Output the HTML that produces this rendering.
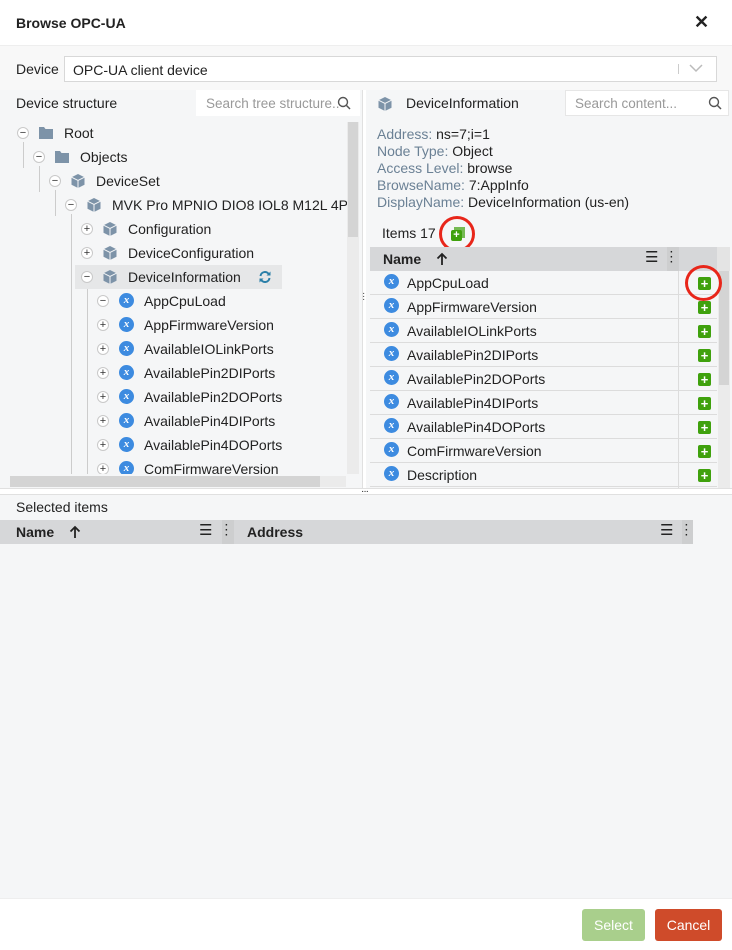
<!DOCTYPE html>
<html><head><meta charset="utf-8">
<style>
*{box-sizing:border-box;margin:0;padding:0}
body{width:732px;height:950px;position:relative;overflow:hidden;background:#f5f6f7;font-family:"Liberation Sans",sans-serif;font-size:14px;color:#222}
.a{position:absolute}
.t{position:absolute;white-space:nowrap;line-height:16px}
.tg{position:absolute;width:12px;height:12px;border:1px solid #c9c9c9;border-radius:50%;background:#fff;font-size:11px;line-height:10px;text-align:center;color:#333}
.xi{position:absolute;width:15px;height:15px;border-radius:50%;background:#3d8be0;color:#fff;font:italic bold 11px "Liberation Serif",serif;text-align:center;line-height:14px}
.gp{position:absolute;width:13px;height:13px;background:#3fa10d;border-radius:2px;color:#fff;font:bold 13px/13px "Liberation Sans",sans-serif;text-align:center}
.row{position:absolute;left:370px;width:347px;height:24px;border-bottom:1px solid #dcdcdc}
.ring{position:absolute;border:3px solid #e8261a;border-radius:50%}
</style></head><body>
<svg width="0" height="0" style="position:absolute"><defs>
<symbol id="cube" viewBox="0 0 16 16"><path d="M8 1l6.5 3.2v7.6L8 15 1.5 11.8V4.2z" fill="#7d93a8"/><path d="M1.5 4.2L8 7.4l6.5-3.2M8 7.4V15" fill="none" stroke="#f5f6f7" stroke-width="1"/></symbol>
<symbol id="fold" viewBox="0 0 16 16"><path d="M1 2h5l1.5 2H15v10H1z" fill="#7d93a8"/></symbol>
<symbol id="up" viewBox="0 0 12 14"><path d="M6 13V2M1.5 6.5L6 2l4.5 4.5" fill="none" stroke="#222" stroke-width="1.8"/></symbol>
</defs></svg>
<!-- header -->
<div class="a" style="left:0;top:0;width:732px;height:46px;background:#fff;border-bottom:1px solid #eee"></div>
<div class="t" style="left:16px;top:15px;font-weight:bold;font-size:14px">Browse OPC-UA</div>
<div class="t" style="left:694px;top:14px;font-size:18px;font-weight:bold">✕</div>
<!-- device row -->
<div class="a" style="left:0;top:46px;width:732px;height:44px;background:#f8f8f8"></div>
<div class="t" style="left:16px;top:61px">Device</div>
<div class="a" style="left:64px;top:56px;width:653px;height:26px;background:#fff;border:1px solid #d8d8d8"></div>
<div class="t" style="left:73px;top:62px">OPC-UA client device</div>
<div class="a" style="left:678px;top:64px;width:1px;height:10px;background:#ccc"></div>
<svg class="a" style="left:689px;top:64px" width="14" height="9"><path d="M1 1l6 6 6-6" fill="none" stroke="#bbb" stroke-width="1.5"/></svg>
<!-- left panel -->
<div class="t" style="left:16px;top:95px">Device structure</div>
<div class="a" style="left:196px;top:90px;width:164px;height:26px;background:#fff"></div>
<div class="t" style="left:206px;top:96px;color:#999;font-size:13.5px">Search tree structure..</div>
<svg class="a" style="left:337px;top:96px" width="14" height="14"><circle cx="6" cy="6" r="4.5" fill="none" stroke="#555" stroke-width="1.4"/><path d="M9.5 9.5l3.5 3.5" stroke="#555" stroke-width="1.5"/></svg>
<div class="a" style="left:23px;top:142px;width:1px;height:26px;background:#ccc"></div>
<div class="a" style="left:39px;top:166px;width:1px;height:26px;background:#ccc"></div>
<div class="a" style="left:55px;top:190px;width:1px;height:26px;background:#ccc"></div>
<div class="a" style="left:71px;top:214px;width:1px;height:260px;background:#ccc"></div>
<div class="a" style="left:87px;top:286px;width:1px;height:190px;background:#ccc"></div>
<div class="a" style="left:75px;top:265px;width:207px;height:24px;background:#e6e7e8"></div>
<div class="tg" style="left:17px;top:127px">−</div><svg class="a" style="left:38px;top:125px" width="16" height="16"><use href="#fold"/></svg><div class="t" style="left:64px;top:125px">Root</div>
<div class="tg" style="left:33px;top:151px">−</div><svg class="a" style="left:54px;top:149px" width="16" height="16"><use href="#fold"/></svg><div class="t" style="left:80px;top:149px">Objects</div>
<div class="tg" style="left:49px;top:175px">−</div><svg class="a" style="left:70px;top:173px" width="16" height="16"><use href="#cube"/></svg><div class="t" style="left:96px;top:173px">DeviceSet</div>
<div class="tg" style="left:65px;top:199px">−</div><svg class="a" style="left:86px;top:197px" width="16" height="16"><use href="#cube"/></svg><div class="t" style="left:112px;top:197px">MVK Pro MPNIO DIO8 IOL8 M12L 4P</div>
<div class="tg" style="left:81px;top:223px">+</div><svg class="a" style="left:102px;top:221px" width="16" height="16"><use href="#cube"/></svg><div class="t" style="left:128px;top:221px">Configuration</div>
<div class="tg" style="left:81px;top:247px">+</div><svg class="a" style="left:102px;top:245px" width="16" height="16"><use href="#cube"/></svg><div class="t" style="left:128px;top:245px">DeviceConfiguration</div>
<div class="tg" style="left:81px;top:271px">−</div><svg class="a" style="left:102px;top:269px" width="16" height="16"><use href="#cube"/></svg><div class="t" style="left:128px;top:269px">DeviceInformation</div>
<svg class="a" style="left:258px;top:270px" width="14" height="14"><path d="M2.5 6A4.5 4.5 0 0 1 11 4.5M11.5 8A4.5 4.5 0 0 1 3 9.5" fill="none" stroke="#2a7fa8" stroke-width="2"/><path d="M12.5 1.5v4h-4zM1.5 12.5v-4h4z" fill="#2a7fa8"/></svg>
<div class="tg" style="left:97px;top:295px">−</div><div class="xi" style="left:119px;top:293px">x</div><div class="t" style="left:144px;top:293px">AppCpuLoad</div>
<div class="tg" style="left:97px;top:319px">+</div><div class="xi" style="left:119px;top:317px">x</div><div class="t" style="left:144px;top:317px">AppFirmwareVersion</div>
<div class="tg" style="left:97px;top:343px">+</div><div class="xi" style="left:119px;top:341px">x</div><div class="t" style="left:144px;top:341px">AvailableIOLinkPorts</div>
<div class="tg" style="left:97px;top:367px">+</div><div class="xi" style="left:119px;top:365px">x</div><div class="t" style="left:144px;top:365px">AvailablePin2DIPorts</div>
<div class="tg" style="left:97px;top:391px">+</div><div class="xi" style="left:119px;top:389px">x</div><div class="t" style="left:144px;top:389px">AvailablePin2DOPorts</div>
<div class="tg" style="left:97px;top:415px">+</div><div class="xi" style="left:119px;top:413px">x</div><div class="t" style="left:144px;top:413px">AvailablePin4DIPorts</div>
<div class="tg" style="left:97px;top:439px">+</div><div class="xi" style="left:119px;top:437px">x</div><div class="t" style="left:144px;top:437px">AvailablePin4DOPorts</div>
<div class="tg" style="left:97px;top:463px">+</div><div class="xi" style="left:119px;top:461px">x</div><div class="t" style="left:144px;top:461px">ComFirmwareVersion</div>
<div class="a" style="left:347px;top:122px;width:12px;height:352px;background:#ebebeb"></div>
<div class="a" style="left:348px;top:122px;width:10px;height:115px;background:#d4d4d4"></div>
<div class="a" style="left:0;top:474px;width:346px;height:14px;background:#f5f6f7"></div>
<div class="a" style="left:10px;top:476px;width:310px;height:11px;background:#d4d4d4"></div>
<div class="a" style="left:320px;top:476px;width:26px;height:11px;background:#ebebeb"></div>
<!-- vertical splitter -->
<div class="a" style="left:362px;top:90px;width:4px;height:398px;background:#fff;border-left:1px solid #e0e0e0"></div>
<div class="t" style="left:362px;top:292px;font-size:10px;line-height:3px;color:#444">·<br>·<br>·</div>
<!-- right panel -->
<svg class="a" style="left:377px;top:96px" width="16" height="16"><use href="#cube"/></svg>
<div class="t" style="left:406px;top:95px">DeviceInformation</div>
<div class="a" style="left:565px;top:90px;width:164px;height:26px;background:#fff;border:1px solid #e6e6e6"></div>
<div class="t" style="left:575px;top:96px;color:#999;font-size:13.5px">Search content...</div>
<svg class="a" style="left:708px;top:96px" width="14" height="14"><circle cx="6" cy="6" r="4.5" fill="none" stroke="#555" stroke-width="1.4"/><path d="M9.5 9.5l3.5 3.5" stroke="#555" stroke-width="1.5"/></svg>
<div class="t" style="left:377px;top:126px;color:#6b8195">Address: <span style="color:#222">ns=7;i=1</span></div>
<div class="t" style="left:377px;top:143px;color:#6b8195">Node Type: <span style="color:#222">Object</span></div>
<div class="t" style="left:377px;top:160px;color:#6b8195">Access Level: <span style="color:#222">browse</span></div>
<div class="t" style="left:377px;top:177px;color:#6b8195">BrowseName: <span style="color:#222">7:AppInfo</span></div>
<div class="t" style="left:377px;top:194px;color:#6b8195">DisplayName: <span style="color:#222">DeviceInformation (us-en)</span></div>
<div class="t" style="left:382px;top:225px">Items 17</div>
<div class="a" style="left:454px;top:227px;width:11px;height:11px;background:#3fa10d;opacity:.7"></div>
<div class="gp" style="left:451px;top:230px;width:11px;height:11px;font-size:11px;line-height:11px">+</div>
<div class="ring" style="left:439px;top:216px;width:36px;height:36px"></div>
<div class="a" style="left:370px;top:247px;width:347px;height:24px;background:#d6d7d9"></div>
<div class="a" style="left:717px;top:247px;width:13px;height:24px;background:#e4e4e4"></div>
<div class="t" style="left:383px;top:251px;font-weight:bold">Name</div>
<svg class="a" style="left:436px;top:252px" width="12" height="14"><use href="#up"/></svg>
<div class="t" style="left:645px;top:250px;font-size:15px">☰</div>
<div class="a" style="left:667px;top:247px;width:12px;height:24px;background:#cdcecf"></div>
<div class="t" style="left:670px;top:250px;font-weight:bold;font-size:10px;line-height:5px">·<br>·<br>·</div>
<div class="a" style="left:678px;top:271px;width:1px;height:217px;background:#dcdcdc"></div>
<div class="a" style="left:718px;top:271px;width:12px;height:217px;background:#ebebeb"></div>
<div class="a" style="left:719px;top:271px;width:10px;height:114px;background:#d4d4d4"></div>
<div class="row" style="top:271px"></div><div class="xi" style="left:384px;top:274px">x</div><div class="t" style="left:407px;top:275px">AppCpuLoad</div><div class="gp" style="left:698px;top:277px">+</div>
<div class="row" style="top:295px"></div><div class="xi" style="left:384px;top:298px">x</div><div class="t" style="left:407px;top:299px">AppFirmwareVersion</div><div class="gp" style="left:698px;top:301px">+</div>
<div class="row" style="top:319px"></div><div class="xi" style="left:384px;top:322px">x</div><div class="t" style="left:407px;top:323px">AvailableIOLinkPorts</div><div class="gp" style="left:698px;top:325px">+</div>
<div class="row" style="top:343px"></div><div class="xi" style="left:384px;top:346px">x</div><div class="t" style="left:407px;top:347px">AvailablePin2DIPorts</div><div class="gp" style="left:698px;top:349px">+</div>
<div class="row" style="top:367px"></div><div class="xi" style="left:384px;top:370px">x</div><div class="t" style="left:407px;top:371px">AvailablePin2DOPorts</div><div class="gp" style="left:698px;top:373px">+</div>
<div class="row" style="top:391px"></div><div class="xi" style="left:384px;top:394px">x</div><div class="t" style="left:407px;top:395px">AvailablePin4DIPorts</div><div class="gp" style="left:698px;top:397px">+</div>
<div class="row" style="top:415px"></div><div class="xi" style="left:384px;top:418px">x</div><div class="t" style="left:407px;top:419px">AvailablePin4DOPorts</div><div class="gp" style="left:698px;top:421px">+</div>
<div class="row" style="top:439px"></div><div class="xi" style="left:384px;top:442px">x</div><div class="t" style="left:407px;top:443px">ComFirmwareVersion</div><div class="gp" style="left:698px;top:445px">+</div>
<div class="row" style="top:463px"></div><div class="xi" style="left:384px;top:466px">x</div><div class="t" style="left:407px;top:467px">Description</div><div class="gp" style="left:698px;top:469px">+</div>
<div class="ring" style="left:685px;top:265px;width:37px;height:36px"></div>
<!-- horizontal splitter -->
<div class="a" style="left:0;top:488px;width:732px;height:7px;background:#fff;border-top:1px solid #e0e0e0;border-bottom:1px solid #e0e0e0"></div>
<div class="t" style="left:361px;top:484px;font-size:10px;letter-spacing:-1px">···</div>
<!-- selected items -->
<div class="t" style="left:16px;top:499px">Selected items</div>
<div class="a" style="left:0;top:520px;width:693px;height:24px;background:#d6d7d9"></div>
<div class="t" style="left:16px;top:524px;font-weight:bold">Name</div>
<svg class="a" style="left:69px;top:525px" width="12" height="14"><use href="#up"/></svg>
<div class="t" style="left:199px;top:523px;font-size:15px">☰</div>
<div class="a" style="left:222px;top:520px;width:12px;height:24px;background:#cdcecf"></div>
<div class="t" style="left:225px;top:523px;font-weight:bold;font-size:10px;line-height:5px">·<br>·<br>·</div>
<div class="t" style="left:247px;top:524px;font-weight:bold">Address</div>
<div class="t" style="left:660px;top:523px;font-size:15px">☰</div>
<div class="a" style="left:682px;top:520px;width:11px;height:24px;background:#cdcecf"></div>
<div class="t" style="left:685px;top:523px;font-weight:bold;font-size:10px;line-height:5px">·<br>·<br>·</div>
<!-- footer -->
<div class="a" style="left:0;top:898px;width:732px;height:52px;background:#fff;border-top:1px solid #eee"></div>
<div class="a" style="left:582px;top:909px;width:63px;height:32px;background:#a9cf8c;border-radius:3px;color:#fff;text-align:center;line-height:32px">Select</div>
<div class="a" style="left:655px;top:909px;width:67px;height:32px;background:#cf4b2a;border-radius:3px;color:#fff;text-align:center;line-height:32px">Cancel</div>
</body></html>
